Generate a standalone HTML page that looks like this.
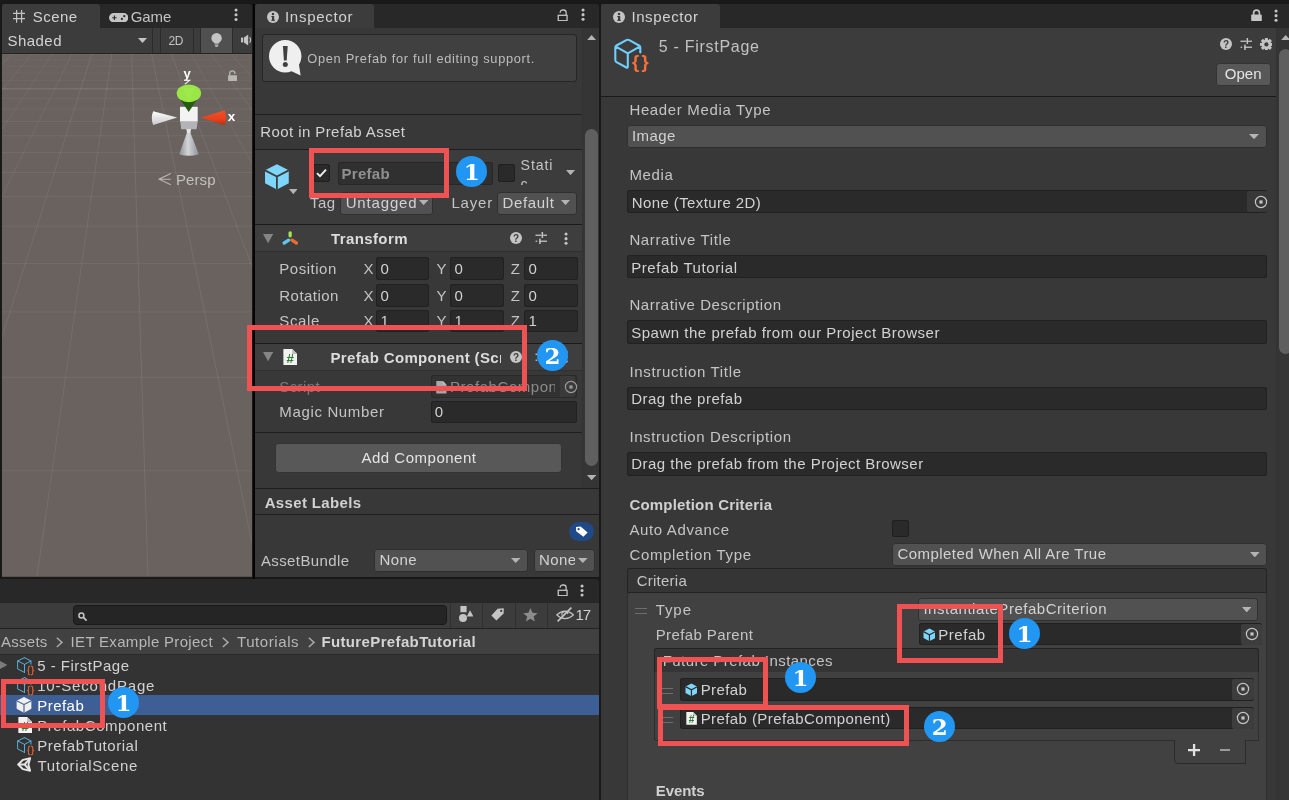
<!DOCTYPE html>
<html lang="en"><head><meta charset="utf-8"><title>Unity Inspector</title>
<style>
*{margin:0;padding:0;box-sizing:border-box}
html,body{width:1289px;height:800px;overflow:hidden;background:#191919}
body{font-family:"Liberation Sans",sans-serif;position:relative}
#root{position:absolute;left:0;top:0;width:1289px;height:800px;will-change:transform}
.a{position:absolute;display:block}
.t{white-space:nowrap;line-height:normal}
</style></head>
<body>
<div id="root">
<div class="a" style="left:2px;top:3.8px;width:249.8px;height:24px;background:#282828;border-radius:0 3px 0 0;"></div>
<div class="a" style="left:2px;top:3.8px;width:97.8px;height:24px;background:#3c3c3c;border-radius:3px 3px 0 0;"></div>
<svg class="a" style="left:13px;top:10px;" width="12.4" height="12.8" viewBox="0 0 12.4 12.8"><g stroke="#c4c4c4" stroke-width="1.2"><path d="M3.6 0V12.8M8.6 0V12.8M0 3.4H12.4M0 8.6H12.4"/></g></svg>
<div class="a t" style="left:32.8px;top:8.00px;font-size:15px;color:#d2d2d2;letter-spacing:0.467px;">Scene</div>
<svg class="a" style="left:109px;top:13px;" width="19.4" height="9.4" viewBox="0 0 19.4 9.4"><rect x="0" y="0" width="19.4" height="9.4" rx="4.7" fill="#c4c4c4"/><path d="M3.2 4.7H7.6M5.4 2.5V6.9" stroke="#282828" stroke-width="1.1"/><circle cx="15.3" cy="3.2" r="1.1" fill="#282828"/><circle cx="12.9" cy="5.9" r="1.1" fill="#282828"/></svg>
<div class="a t" style="left:130.7px;top:8.00px;font-size:15px;color:#c4c4c4;letter-spacing:-0.049px;">Game</div>
<svg class="a" style="left:233.95px;top:8.25px;" width="4.1" height="13.5" viewBox="0 0 4.1 13.5"><circle cx="2.05" cy="2.05" r="1.55" fill="#c4c4c4"/><circle cx="2.05" cy="6.75" r="1.55" fill="#c4c4c4"/><circle cx="2.05" cy="11.45" r="1.55" fill="#c4c4c4"/></svg>
<div class="a" style="left:2px;top:27.6px;width:250.3px;height:25.6px;background:#3c3c3c;"></div>
<div class="a" style="left:2px;top:53px;width:250.3px;height:1.2px;background:#232323;"></div>
<div class="a t" style="left:7.6px;top:32.00px;font-size:15px;color:#d2d2d2;letter-spacing:0.436px;">Shaded</div>
<svg class="a" style="left:138.2px;top:38.4px;" width="9" height="5" viewBox="0 0 9 5"><path d="M0 0H9L4.5 5Z" fill="#c4c4c4"/></svg>
<div class="a" style="left:152px;top:27.6px;width:1px;height:25.4px;background:#2c2c2c;"></div>
<div class="a" style="left:160px;top:27.6px;width:1px;height:25.4px;background:#2c2c2c;"></div>
<div class="a t" style="left:168.4px;top:34.00px;font-size:12px;color:#c4c4c4;letter-spacing:-0.240px;">2D</div>
<div class="a" style="left:193px;top:27.6px;width:1px;height:25.4px;background:#2c2c2c;"></div>
<div class="a" style="left:200.6px;top:27.6px;width:31.8px;height:25.4px;background:#505050;"></div>
<div class="a" style="left:200.2px;top:27.6px;width:1px;height:25.4px;background:#2c2c2c;"></div>
<div class="a" style="left:232.2px;top:27.6px;width:1px;height:25.4px;background:#2c2c2c;"></div>
<svg class="a" style="left:210.6px;top:33.2px;" width="11.2" height="13.8" viewBox="0 0 11.2 13.8"><circle cx="5.6" cy="5.2" r="5.2" fill="#c4c4c4"/><path d="M2.6 8H8.6L7.8 10.6H3.4Z" fill="#c4c4c4"/><rect x="3.6" y="11.4" width="4" height="1.3" rx="0.6" fill="#c4c4c4"/><rect x="4.4" y="13" width="2.4" height="0.8" fill="#c4c4c4"/></svg>
<svg class="a" style="left:241px;top:34.4px;" width="11.3" height="12" viewBox="0 0 11.3 12"><path d="M0 3.6H2.2V8.4H0Z" fill="#c4c4c4"/><path d="M3 3.4L7.2 0.4V11.6L3 8.6Z" fill="#c4c4c4"/><path d="M8.6 3.2Q10.4 6 8.6 8.8" fill="none" stroke="#c4c4c4" stroke-width="1.2"/></svg>
<svg class="a" style="left:2px;top:54.2px;" width="250.3" height="522.8" viewBox="0 0 250.3 522.8"><rect width="250.3" height="522.8" fill="#69625e"/><path d="M0 416.81H250.3" stroke="rgba(255,255,255,0.072)" stroke-width="1"/><path d="M0 323.36H250.3" stroke="rgba(255,255,255,0.072)" stroke-width="1"/><path d="M0 257.88H250.3" stroke="rgba(255,255,255,0.072)" stroke-width="1"/><path d="M0 209.45H250.3" stroke="rgba(255,255,255,0.072)" stroke-width="1"/><path d="M0 172.17H250.3" stroke="rgba(255,255,255,0.072)" stroke-width="1"/><path d="M0 142.59H250.3" stroke="rgba(255,255,255,0.072)" stroke-width="1"/><path d="M0 118.55H250.3" stroke="rgba(255,255,255,0.072)" stroke-width="1"/><path d="M0 98.63H250.3" stroke="rgba(255,255,255,0.072)" stroke-width="1"/><path d="M0 81.85H250.3" stroke="rgba(255,255,255,0.070)" stroke-width="1"/><path d="M0 67.52H250.3" stroke="rgba(255,255,255,0.061)" stroke-width="1"/><path d="M0 55.14H250.3" stroke="rgba(255,255,255,0.054)" stroke-width="1"/><path d="M0 44.34H250.3" stroke="rgba(255,255,255,0.047)" stroke-width="1"/><path d="M0 34.84H250.3" stroke="rgba(255,255,255,0.150)" stroke-width="1"/><path d="M0 26.41H250.3" stroke="rgba(255,255,255,0.036)" stroke-width="1"/><path d="M0 18.88H250.3" stroke="rgba(255,255,255,0.035)" stroke-width="1"/><path d="M0 12.12H250.3" stroke="rgba(255,255,255,0.035)" stroke-width="1"/><path d="M0 6.02H250.3" stroke="rgba(255,255,255,0.035)" stroke-width="1"/><path d="M0 0.47H250.3" stroke="rgba(255,255,255,0.035)" stroke-width="1"/><path d="M-149.01 0L-1408.00 522.8" stroke="rgba(255,255,255,0.065)" stroke-width="1"/><path d="M-129.11 0L-1297.00 522.8" stroke="rgba(255,255,255,0.065)" stroke-width="1"/><path d="M-109.21 0L-1186.00 522.8" stroke="rgba(255,255,255,0.065)" stroke-width="1"/><path d="M-89.31 0L-1075.00 522.8" stroke="rgba(255,255,255,0.065)" stroke-width="1"/><path d="M-69.41 0L-964.00 522.8" stroke="rgba(255,255,255,0.065)" stroke-width="1"/><path d="M-49.51 0L-853.00 522.8" stroke="rgba(255,255,255,0.065)" stroke-width="1"/><path d="M-29.61 0L-742.00 522.8" stroke="rgba(255,255,255,0.065)" stroke-width="1"/><path d="M-9.71 0L-631.00 522.8" stroke="rgba(255,255,255,0.065)" stroke-width="1"/><path d="M10.19 0L-520.00 522.8" stroke="rgba(255,255,255,0.065)" stroke-width="1"/><path d="M30.09 0L-409.00 522.8" stroke="rgba(255,255,255,0.065)" stroke-width="1"/><path d="M49.99 0L-298.00 522.8" stroke="rgba(255,255,255,0.065)" stroke-width="1"/><path d="M69.89 0L-187.00 522.8" stroke="rgba(255,255,255,0.065)" stroke-width="1"/><path d="M89.79 0L-76.00 522.8" stroke="rgba(255,255,255,0.085)" stroke-width="1"/><path d="M109.69 0L35.00 522.8" stroke="rgba(255,255,255,0.085)" stroke-width="1"/><path d="M129.59 0L146.00 522.8" stroke="rgba(255,255,255,0.085)" stroke-width="1"/><path d="M149.49 0L257.00 522.8" stroke="rgba(255,255,255,0.085)" stroke-width="1"/><path d="M169.39 0L368.00 522.8" stroke="rgba(255,255,255,0.085)" stroke-width="1"/><path d="M189.29 0L479.00 522.8" stroke="rgba(255,255,255,0.065)" stroke-width="1"/><path d="M209.18 0L590.00 522.8" stroke="rgba(255,255,255,0.065)" stroke-width="1"/><path d="M229.08 0L701.00 522.8" stroke="rgba(255,255,255,0.065)" stroke-width="1"/><path d="M248.98 0L812.00 522.8" stroke="rgba(255,255,255,0.065)" stroke-width="1"/><path d="M268.88 0L923.00 522.8" stroke="rgba(255,255,255,0.065)" stroke-width="1"/><path d="M288.78 0L1034.00 522.8" stroke="rgba(255,255,255,0.065)" stroke-width="1"/><path d="M308.68 0L1145.00 522.8" stroke="rgba(255,255,255,0.065)" stroke-width="1"/><path d="M328.58 0L1256.00 522.8" stroke="rgba(255,255,255,0.065)" stroke-width="1"/><path d="M348.48 0L1367.00 522.8" stroke="rgba(255,255,255,0.065)" stroke-width="1"/><path d="M368.38 0L1478.00 522.8" stroke="rgba(255,255,255,0.065)" stroke-width="1"/><path d="M388.28 0L1589.00 522.8" stroke="rgba(255,255,255,0.065)" stroke-width="1"/><path d="M408.18 0L1700.00 522.8" stroke="rgba(255,255,255,0.065)" stroke-width="1"/></svg>
<svg class="a" style="left:228px;top:70.4px;" width="9.2" height="11.2" viewBox="0 0 9.2 11.2"><path d="M1.7 5.4V3.4A2.6 2.6 0 0 1 6.9 3.4V4" fill="none" stroke="#b9b6b4" stroke-width="1.3"/><rect x="0.1" y="5.2" width="8.9" height="5.9" rx="0.6" fill="#b9b6b4"/></svg>
<svg class="a" style="left:140px;top:60px;" width="112" height="100" viewBox="0 0 112 100"><defs><linearGradient id="gl" x1="0" y1="0" x2="0" y2="1"><stop offset="0" stop-color="#ffffff"/><stop offset="1" stop-color="#c9c9cc"/></linearGradient><linearGradient id="gr" x1="0" y1="0" x2="0" y2="1"><stop offset="0" stop-color="#f0522a"/><stop offset="0.6" stop-color="#e8401c"/><stop offset="1" stop-color="#b8300f"/></linearGradient><linearGradient id="gb" x1="0" y1="0" x2="1" y2="0"><stop offset="0" stop-color="#8e9097"/><stop offset="0.45" stop-color="#d4d5d9"/><stop offset="1" stop-color="#8e9097"/></linearGradient></defs><path d="M48.6 68.0L58.8 94.2Q49.0 97.4 39.2 94.2Z" fill="url(#gb)"/><path d="M40.2 61.0H57.6L56.6 69.2H41.2Z" fill="#b4b4b8"/><path d="M46.4 69.0H51.0L50.4 73.0H47.0Z" fill="#e4e4e6"/><rect x="40.0" y="46.8" width="17.7" height="14.4" fill="#f3f3f3"/><path d="M37.2 57.4L13.2 51.2Q10.4 58.0 13.2 65.0Z" fill="url(#gl)"/><path d="M61.0 57.6L84.6 50.2Q87.6 57.6 84.6 65.2Z" fill="url(#gr)"/><path d="M40.4 39.5L48.7 52.0L57.0 39.5Z" fill="#255c12"/><ellipse cx="48.9" cy="33.3" rx="12.2" ry="8.9" fill="#9ae646"/><path d="M43.0 28.0L48.8 42.0L55.0 28.0Z" fill="#a2ec52" opacity="0.6"/><text x="43.6" y="18.4" font-family="Liberation Sans,sans-serif" font-weight="bold" font-size="13" fill="#ffffff">y</text><path d="M44.4 20.4H49.6L44.8 24.2" fill="none" stroke="#e8e8e8" stroke-width="1.2"/><text x="87.8" y="60.6" font-family="Liberation Sans,sans-serif" font-weight="bold" font-size="13.5" fill="#ffffff">x</text></svg>
<svg class="a" style="left:158px;top:173.4px;" width="13.4" height="12.6" viewBox="0 0 13.4 12.6"><path d="M12.8 0.6L1 6.2L12.8 11.8M1 6.2H12.8" fill="none" stroke="#b9b6b4" stroke-width="1.1"/></svg>
<div class="a t" style="left:175.9px;top:171.00px;font-size:15px;color:#c3c0be;letter-spacing:0.103px;">Persp</div>
<div class="a" style="left:252.5px;top:3.8px;width:2.2px;height:574.8px;background:#050505;"></div>
<div class="a" style="left:254.6px;top:3.8px;width:344.4px;height:24px;background:#282828;border-radius:0 3px 0 0;"></div>
<div class="a" style="left:254.6px;top:3.8px;width:119px;height:24px;background:#3c3c3c;border-radius:3px 3px 0 0;"></div>
<svg class="a" style="left:267px;top:11px;" width="12" height="12" viewBox="0 0 12 12"><circle cx="6" cy="6" r="6" fill="#c4c4c4"/><rect x="5" y="5" width="2.2" height="4.6" fill="#3c3c3c"/><rect x="4.3" y="5" width="2" height="1" fill="#3c3c3c"/><rect x="4.3" y="8.8" width="3.6" height="1" fill="#3c3c3c"/><circle cx="6" cy="3.1" r="1.25" fill="#3c3c3c"/></svg>
<div class="a t" style="left:284.9px;top:8.00px;font-size:15px;color:#d2d2d2;letter-spacing:0.750px;">Inspector</div>
<svg class="a" style="left:557.4px;top:8.8px;" width="11" height="12.4" viewBox="0 0 11 12.4"><path d="M9.1 6.2V3.5A2.5 2.5 0 0 0 6.6 1H5.6A2.4 2.4 0 0 0 3.2 3V3.8" fill="none" stroke="#c4c4c4" stroke-width="1.3"/><rect x="1.25" y="6.3" width="8.8" height="5.4" fill="none" stroke="#c4c4c4" stroke-width="1.3"/></svg>
<svg class="a" style="left:581.05px;top:8.45px;" width="4.1" height="13.3" viewBox="0 0 4.1 13.3"><circle cx="2.05" cy="2.05" r="1.55" fill="#c4c4c4"/><circle cx="2.05" cy="6.65" r="1.55" fill="#c4c4c4"/><circle cx="2.05" cy="11.25" r="1.55" fill="#c4c4c4"/></svg>
<div class="a" style="left:254.6px;top:27.8px;width:344.4px;height:549.4px;background:#383838;"></div>
<div class="a" style="left:582.4px;top:27.8px;width:16.6px;height:460.4px;background:#353535;"></div>
<div class="a" style="left:582.4px;top:27.8px;width:1px;height:460.4px;background:#323232;"></div>
<svg class="a" style="left:586.8px;top:35.2px;" width="9.2" height="5.2" viewBox="0 0 9.2 5.2"><path d="M0 5.2H9.2L4.6 0Z" fill="#b4b4b4"/></svg>
<div class="a" style="left:585px;top:129.4px;width:13px;height:337px;background:#5f5f5f;border-radius:6.5px;"></div>
<svg class="a" style="left:586.8px;top:475px;" width="9.2" height="5.2" viewBox="0 0 9.2 5.2"><path d="M0 0H9.2L4.6 5.2Z" fill="#b4b4b4"/></svg>
<div class="a" style="left:261.5px;top:34.2px;width:315px;height:48px;background:#404040;box-shadow:inset 0 0 0 1px #262626;border-radius:3.5px;"></div>
<svg class="a" style="left:268.6px;top:40.2px;" width="33" height="36" viewBox="0 0 33 36"><circle cx="16.2" cy="16.2" r="16.2" fill="#efefef"/><path d="M20 30L31.6 35.4L29.6 22Z" fill="#efefef"/><path d="M13.9 6H18.7L17.7 20.4H14.9Z" fill="#404040"/><circle cx="16.3" cy="24.6" r="2.5" fill="#404040"/></svg>
<div class="a t" style="left:307.3px;top:51.00px;font-size:12.8px;color:#bdbdbd;letter-spacing:0.695px;">Open Prefab for full editing support.</div>
<div class="a" style="left:254.6px;top:114px;width:327.8px;height:1px;background:#1f1f1f;"></div>
<div class="a t" style="left:260.2px;top:123.00px;font-size:15px;color:#d2d2d2;letter-spacing:0.424px;">Root in Prefab Asset</div>
<div class="a" style="left:254.6px;top:149px;width:327.8px;height:1px;background:#1f1f1f;"></div>
<div class="a" style="left:254.6px;top:150px;width:327.8px;height:74.4px;background:#3c3c3c;"></div>
<svg class="a" style="left:264.2px;top:163.2px;" width="25.8" height="27.6" viewBox="0 0 100 102"><path d="M50 2L96 26V76L50 100L4 76V26Z" fill="#7fd6fd"/><path d="M4 26L50 50L96 26M50 50V100" fill="none" stroke="#3c3c3c" stroke-width="6.97674"/></svg>
<svg class="a" style="left:288.6px;top:189px;" width="8.6" height="5.2" viewBox="0 0 8.6 5.2"><path d="M0 0H8.6L4.3 5.2Z" fill="#b4b4b4"/></svg>
<div class="a" style="left:313px;top:164.4px;width:17px;height:17.2px;background:#2a2a2a;box-shadow:inset 0 0 0 1px #1f1f1f;border-radius:3px;"></div>
<svg class="a" style="left:316.4px;top:167.6px;" width="11" height="10" viewBox="0 0 11 10"><path d="M1 5.2L4 8.2L10 1.6" fill="none" stroke="#f0f0f0" stroke-width="1.9"/></svg>
<div class="a" style="left:338.3px;top:162.4px;width:155px;height:22.6px;background:#303030;box-shadow:inset 0 0 0 1px #272727;border-radius:3px;"></div>
<div class="a t" style="left:341.6px;top:165.00px;font-size:15px;color:#909090;letter-spacing:0.263px;font-weight:700;">Prefab</div>
<div class="a" style="left:498.2px;top:164.4px;width:17px;height:17.2px;background:#2a2a2a;box-shadow:inset 0 0 0 1px #1f1f1f;border-radius:3px;"></div>
<div class="a t" style="left:520.6px;top:157.00px;font-size:14.2px;color:#c4c4c4;letter-spacing:0.846px;">Stati</div>
<div class="a" style="left:520px;top:176px;width:40px;height:9.2px;overflow:hidden"><div class="a t" style="left:.6px;top:0.2px;font-size:14.2px;color:#c4c4c4">c</div></div>
<svg class="a" style="left:566px;top:170.2px;" width="9" height="5.2" viewBox="0 0 9 5.2"><path d="M0 0H9L4.5 5.2Z" fill="#b4b4b4"/></svg>
<div class="a t" style="left:310px;top:194.00px;font-size:15px;color:#c4c4c4;letter-spacing:0.507px;">Tag</div>
<div class="a" style="left:340px;top:191.8px;width:93.2px;height:23.2px;background:#515151;box-shadow:inset 0 0 0 1px #303030;border-radius:3.5px;"></div>
<div class="a t" style="left:345.7px;top:194.00px;font-size:15px;color:#d2d2d2;letter-spacing:0.835px;">Untagged</div>
<svg class="a" style="left:419px;top:200px;" width="9.2" height="5.2" viewBox="0 0 9.2 5.2"><path d="M0 0H9.2L4.6 5.2Z" fill="#b4b4b4"/></svg>
<div class="a t" style="left:451.4px;top:194.00px;font-size:15px;color:#c4c4c4;letter-spacing:0.819px;">Layer</div>
<div class="a" style="left:497.2px;top:191.8px;width:80px;height:23.2px;background:#515151;box-shadow:inset 0 0 0 1px #303030;border-radius:3.5px;"></div>
<div class="a t" style="left:502.4px;top:194.00px;font-size:15px;color:#d2d2d2;letter-spacing:0.679px;">Default</div>
<svg class="a" style="left:561px;top:200px;" width="9" height="5.2" viewBox="0 0 9 5.2"><path d="M0 0H9L4.5 5.2Z" fill="#b4b4b4"/></svg>
<div class="a" style="left:254.6px;top:224.4px;width:327.8px;height:1px;background:#1a1a1a;"></div>
<div class="a" style="left:254.6px;top:225.4px;width:327.8px;height:25.8px;background:#3e3e3e;"></div>
<div class="a" style="left:254.6px;top:251px;width:327.8px;height:1px;background:#303030;"></div>
<svg class="a" style="left:262.8px;top:234.4px;" width="10.2" height="9.2" viewBox="0 0 10.2 9.2"><path d="M0 0H10.2L5.1 9.2Z" fill="#858585"/></svg>
<svg class="a" style="left:282px;top:230.6px;" width="16.4" height="14.4" viewBox="0 0 16.4 14.4"><rect x="6.5" y="0.2" width="3.3" height="6.2" rx="1.6" fill="#a5e34b"/><path d="M6.6 9.2L2.2 12" stroke="#5cc8f2" stroke-width="3.3" stroke-linecap="round"/><path d="M10 9.2L14.4 12" stroke="#ef6a32" stroke-width="3.3" stroke-linecap="round"/></svg>
<div class="a t" style="left:331px;top:230.00px;font-size:15px;color:#dcdcdc;letter-spacing:0.393px;font-weight:700;">Transform</div>
<svg class="a" style="left:510px;top:232.2px;" width="12" height="12" viewBox="0 0 12 12"><circle cx="6" cy="6" r="6" fill="#c4c4c4"/><text x="6" y="9.6" font-family="Liberation Sans,sans-serif" font-weight="bold" font-size="10" text-anchor="middle" fill="#3e3e3e">?</text></svg>
<svg class="a" style="left:534.8px;top:232.2px;" width="12.4" height="12" viewBox="0 0 12.4 12"><g fill="#c4c4c4"><rect x="0.5" y="2.6" width="6" height="1.3"/><rect x="8.2" y="2.6" width="3.8" height="1.3"/><rect x="6.6" y="0" width="1.5" height="6"/><rect x="0.6" y="8.6" width="1.6" height="1.3"/><rect x="4.2" y="8.6" width="7.8" height="1.3"/><rect x="4.2" y="6.6" width="1.5" height="5.4"/></g></svg>
<svg class="a" style="left:563.95px;top:231.55px;" width="4.1" height="13.3" viewBox="0 0 4.1 13.3"><circle cx="2.05" cy="2.05" r="1.55" fill="#c4c4c4"/><circle cx="2.05" cy="6.65" r="1.55" fill="#c4c4c4"/><circle cx="2.05" cy="11.25" r="1.55" fill="#c4c4c4"/></svg>
<div class="a t" style="left:279.3px;top:260.00px;font-size:15px;color:#c4c4c4;letter-spacing:0.519px;">Position</div>
<div class="a t" style="left:363.4px;top:260.00px;font-size:15px;color:#c4c4c4;">X</div>
<div class="a" style="left:376.2px;top:257.1px;width:53.2px;height:22.6px;background:#2a2a2a;box-shadow:inset 0 0 0 1px #212121;border-radius:3px;"></div>
<div class="a t" style="left:380.6px;top:260.00px;font-size:15px;color:#d2d2d2;">0</div>
<div class="a t" style="left:436.5px;top:260.00px;font-size:15px;color:#c4c4c4;">Y</div>
<div class="a" style="left:450.2px;top:257.1px;width:53.6px;height:22.6px;background:#2a2a2a;box-shadow:inset 0 0 0 1px #212121;border-radius:3px;"></div>
<div class="a t" style="left:454.6px;top:260.00px;font-size:15px;color:#d2d2d2;">0</div>
<div class="a t" style="left:510.8px;top:260.00px;font-size:15px;color:#c4c4c4;">Z</div>
<div class="a" style="left:524.2px;top:257.1px;width:53.6px;height:22.6px;background:#2a2a2a;box-shadow:inset 0 0 0 1px #212121;border-radius:3px;"></div>
<div class="a t" style="left:528.6px;top:260.00px;font-size:15px;color:#d2d2d2;">0</div>
<div class="a t" style="left:279.3px;top:287.00px;font-size:15px;color:#c4c4c4;letter-spacing:0.461px;">Rotation</div>
<div class="a t" style="left:363.4px;top:287.00px;font-size:15px;color:#c4c4c4;">X</div>
<div class="a" style="left:376.2px;top:284.1px;width:53.2px;height:22.6px;background:#2a2a2a;box-shadow:inset 0 0 0 1px #212121;border-radius:3px;"></div>
<div class="a t" style="left:380.6px;top:287.00px;font-size:15px;color:#d2d2d2;">0</div>
<div class="a t" style="left:436.5px;top:287.00px;font-size:15px;color:#c4c4c4;">Y</div>
<div class="a" style="left:450.2px;top:284.1px;width:53.6px;height:22.6px;background:#2a2a2a;box-shadow:inset 0 0 0 1px #212121;border-radius:3px;"></div>
<div class="a t" style="left:454.6px;top:287.00px;font-size:15px;color:#d2d2d2;">0</div>
<div class="a t" style="left:510.8px;top:287.00px;font-size:15px;color:#c4c4c4;">Z</div>
<div class="a" style="left:524.2px;top:284.1px;width:53.6px;height:22.6px;background:#2a2a2a;box-shadow:inset 0 0 0 1px #212121;border-radius:3px;"></div>
<div class="a t" style="left:528.6px;top:287.00px;font-size:15px;color:#d2d2d2;">0</div>
<div class="a t" style="left:279.3px;top:312.00px;font-size:15px;color:#c4c4c4;letter-spacing:0.619px;">Scale</div>
<div class="a t" style="left:363.4px;top:312.00px;font-size:15px;color:#c4c4c4;">X</div>
<div class="a" style="left:376.2px;top:309.5px;width:53.2px;height:22.6px;background:#2a2a2a;box-shadow:inset 0 0 0 1px #212121;border-radius:3px;"></div>
<div class="a t" style="left:380.6px;top:312.00px;font-size:15px;color:#d2d2d2;">1</div>
<div class="a t" style="left:436.5px;top:312.00px;font-size:15px;color:#c4c4c4;">Y</div>
<div class="a" style="left:450.2px;top:309.5px;width:53.6px;height:22.6px;background:#2a2a2a;box-shadow:inset 0 0 0 1px #212121;border-radius:3px;"></div>
<div class="a t" style="left:454.6px;top:312.00px;font-size:15px;color:#d2d2d2;">1</div>
<div class="a t" style="left:510.8px;top:312.00px;font-size:15px;color:#c4c4c4;">Z</div>
<div class="a" style="left:524.2px;top:309.5px;width:53.6px;height:22.6px;background:#2a2a2a;box-shadow:inset 0 0 0 1px #212121;border-radius:3px;"></div>
<div class="a t" style="left:528.6px;top:312.00px;font-size:15px;color:#d2d2d2;">1</div>
<div class="a" style="left:254.6px;top:343px;width:327.8px;height:1px;background:#1a1a1a;"></div>
<div class="a" style="left:254.6px;top:344px;width:327.8px;height:25.8px;background:#3e3e3e;"></div>
<div class="a" style="left:254.6px;top:369.8px;width:327.8px;height:1px;background:#303030;"></div>
<svg class="a" style="left:263px;top:352.4px;" width="10.2" height="9.2" viewBox="0 0 10.2 9.2"><path d="M0 0H10.2L5.1 9.2Z" fill="#858585"/></svg>
<svg class="a" style="left:282.6px;top:348.6px;" width="14.6" height="16.8" viewBox="0 0 14 17"><path d="M0 0H9L14 5V17H0Z" fill="#f2f2f2"/><path d="M9 0V5H14Z" fill="#bdbdbd"/><text x="7" y="14.6" font-family="Liberation Sans,sans-serif" font-weight="bold" font-size="13.5" text-anchor="middle" fill="#2e7d32">#</text></svg>
<div class="a t" style="left:330.5px;top:349.00px;font-size:15px;color:#dcdcdc;letter-spacing:0.340px;font-weight:700;width:170.4px;overflow:hidden;">Prefab Component (Script)</div>
<svg class="a" style="left:510px;top:350.8px;" width="12" height="12" viewBox="0 0 12 12"><circle cx="6" cy="6" r="6" fill="#c4c4c4"/><text x="6" y="9.6" font-family="Liberation Sans,sans-serif" font-weight="bold" font-size="10" text-anchor="middle" fill="#3e3e3e">?</text></svg>
<svg class="a" style="left:534.8px;top:350.8px;" width="12.4" height="12" viewBox="0 0 12.4 12"><g fill="#c4c4c4"><rect x="0.5" y="2.6" width="6" height="1.3"/><rect x="8.2" y="2.6" width="3.8" height="1.3"/><rect x="6.6" y="0" width="1.5" height="6"/><rect x="0.6" y="8.6" width="1.6" height="1.3"/><rect x="4.2" y="8.6" width="7.8" height="1.3"/><rect x="4.2" y="6.6" width="1.5" height="5.4"/></g></svg>
<svg class="a" style="left:563.95px;top:350.15px;" width="4.1" height="13.3" viewBox="0 0 4.1 13.3"><circle cx="2.05" cy="2.05" r="1.55" fill="#c4c4c4"/><circle cx="2.05" cy="6.65" r="1.55" fill="#c4c4c4"/><circle cx="2.05" cy="11.25" r="1.55" fill="#c4c4c4"/></svg>
<div class="a t" style="left:279.3px;top:378.00px;font-size:15px;color:#7a7a7a;letter-spacing:0.391px;">Script</div>
<div class="a" style="left:430.5px;top:375.2px;width:146px;height:22.4px;background:#323232;box-shadow:inset 0 0 0 1px #2a2a2a;border-radius:3px;"></div>
<div class="a" style="left:560.4px;top:376.2px;width:15px;height:20.4px;background:#3a3a3a;border-radius:0 2px 2px 0;"></div>
<svg class="a" style="left:435.8px;top:381.4px;" width="10.8" height="12.4" viewBox="0 0 14 17"><path d="M0 0H9L14 5V17H0Z" fill="#a8a8a8"/><path d="M9 0V5H14Z" fill="#bdbdbd"/><text x="7" y="14.6" font-family="Liberation Sans,sans-serif" font-weight="bold" font-size="13.5" text-anchor="middle" fill="#5b8f5e">#</text></svg>
<div class="a t" style="left:450px;top:378.00px;font-size:15px;color:#8a8a8a;letter-spacing:0.550px;width:104.6px;overflow:hidden;">PrefabComponent</div>
<svg class="a" style="left:564.4px;top:379.6px;" width="14" height="14" viewBox="0 0 14 14"><circle cx="7" cy="7" r="5.6" fill="none" stroke="#9a9a9a" stroke-width="1.2"/><rect x="5.4" y="5.4" width="3.2" height="3.2" fill="#9a9a9a"/></svg>
<div class="a t" style="left:279.3px;top:403.00px;font-size:15px;color:#c4c4c4;letter-spacing:0.652px;">Magic Number</div>
<div class="a" style="left:430.5px;top:400.6px;width:146px;height:22.2px;background:#2a2a2a;box-shadow:inset 0 0 0 1px #212121;border-radius:3px;"></div>
<div class="a t" style="left:434.8px;top:403.00px;font-size:15px;color:#d2d2d2;">0</div>
<div class="a" style="left:254.6px;top:432.2px;width:327.8px;height:1px;background:#1f1f1f;"></div>
<div class="a" style="left:275.2px;top:443.4px;width:286.6px;height:29.4px;background:#585858;box-shadow:inset 0 0 0 1px #343434;border-radius:4px;"></div>
<div class="a t" style="left:361.4px;top:449.00px;font-size:15px;color:#e4e4e4;letter-spacing:0.516px;">Add Component</div>
<div class="a" style="left:254.6px;top:488.2px;width:344.4px;height:1px;background:#1f1f1f;"></div>
<div class="a t" style="left:264.7px;top:494.00px;font-size:15px;color:#d0d0d0;letter-spacing:0.341px;font-weight:700;">Asset Labels</div>
<div class="a" style="left:254.6px;top:514.2px;width:344.4px;height:1px;background:#1f1f1f;"></div>
<div class="a" style="left:569.3px;top:522px;width:24.8px;height:19px;background:#204a87;border-radius:9.5px;"></div>
<svg class="a" style="left:575px;top:526px;" width="13" height="11" viewBox="0 0 13 11"><path d="M1 1L5.6 0.6L12.6 6.6L8.4 10.8L1.2 5.2Z" fill="#fff"/><circle cx="3.6" cy="3.2" r="1.15" fill="#204a87"/></svg>
<div class="a t" style="left:260.9px;top:552.00px;font-size:15px;color:#c4c4c4;letter-spacing:0.408px;">AssetBundle</div>
<div class="a" style="left:374px;top:548.8px;width:154px;height:23.4px;background:#515151;box-shadow:inset 0 0 0 1px #303030;border-radius:3.5px;"></div>
<div class="a t" style="left:379.6px;top:551.00px;font-size:15px;color:#d2d2d2;letter-spacing:0.380px;">None</div>
<svg class="a" style="left:511px;top:558px;" width="9.4" height="5" viewBox="0 0 9.4 5"><path d="M0 0H9.4L4.7 5Z" fill="#b4b4b4"/></svg>
<div class="a" style="left:533.6px;top:548.8px;width:61.4px;height:23.4px;background:#515151;box-shadow:inset 0 0 0 1px #303030;border-radius:3.5px;"></div>
<div class="a t" style="left:539px;top:551.00px;font-size:15px;color:#d2d2d2;letter-spacing:0.380px;width:36.4px;overflow:hidden;">None</div>
<svg class="a" style="left:578.2px;top:558px;" width="9.6" height="5" viewBox="0 0 9.6 5"><path d="M0 0H9.6L4.8 5Z" fill="#b4b4b4"/></svg>
<div class="a" style="left:0px;top:578.6px;width:599.1px;height:24.2px;background:#282828;border-radius:0 3px 0 0;"></div>
<svg class="a" style="left:556.8px;top:584px;" width="11" height="12.4" viewBox="0 0 11 12.4"><path d="M9.1 6.2V3.5A2.5 2.5 0 0 0 6.6 1H5.6A2.4 2.4 0 0 0 3.2 3V3.8" fill="none" stroke="#c4c4c4" stroke-width="1.3"/><rect x="1.25" y="6.3" width="8.8" height="5.4" fill="none" stroke="#c4c4c4" stroke-width="1.3"/></svg>
<svg class="a" style="left:579.95px;top:583.55px;" width="4.1" height="13.1" viewBox="0 0 4.1 13.1"><circle cx="2.05" cy="2.05" r="1.55" fill="#c4c4c4"/><circle cx="2.05" cy="6.55" r="1.55" fill="#c4c4c4"/><circle cx="2.05" cy="11.05" r="1.55" fill="#c4c4c4"/></svg>
<div class="a" style="left:0px;top:602.8px;width:599.1px;height:26px;background:#3c3c3c;"></div>
<div class="a" style="left:0px;top:628.4px;width:599.1px;height:1px;background:#232323;"></div>
<div class="a" style="left:72.6px;top:605.4px;width:374.4px;height:19.4px;background:#252525;box-shadow:inset 0 0 0 1px #1a1a1a;border-radius:4.5px;"></div>
<svg class="a" style="left:78.4px;top:611.6px;" width="9.4" height="9.4" viewBox="0 0 9.4 9.4"><circle cx="3.4" cy="3.4" r="2.5" fill="none" stroke="#c4c4c4" stroke-width="1.5"/><path d="M5.2 5.2L8.6 8.6" stroke="#c4c4c4" stroke-width="1.8"/></svg>
<div class="a" style="left:449.8px;top:602.8px;width:1px;height:25.6px;background:#303030;"></div>
<div class="a" style="left:481.9px;top:602.8px;width:1px;height:25.6px;background:#303030;"></div>
<div class="a" style="left:515.3px;top:602.8px;width:1px;height:25.6px;background:#303030;"></div>
<div class="a" style="left:547.3px;top:602.8px;width:1px;height:25.6px;background:#303030;"></div>
<svg class="a" style="left:458.8px;top:606px;" width="14.4" height="16.2" viewBox="0 0 14.4 16.2"><rect x="1.4" y="0" width="6.2" height="6.2" fill="#c4c4c4"/><circle cx="4" cy="12" r="4" fill="#c4c4c4"/><path d="M7.8 10.6L11 4.2L14.4 10.6Z" fill="#c4c4c4"/></svg>
<svg class="a" style="left:491.4px;top:608.2px;" width="13.4" height="13" viewBox="0 0 13.4 13"><path d="M6.6 0.8L12.8 0.2L12.6 5.4L5.4 12.6L0.4 7.4Z" fill="#c4c4c4"/><circle cx="10.2" cy="2.9" r="1.1" fill="#3c3c3c"/></svg>
<svg class="a" style="left:523.4px;top:608.2px;" width="14.8" height="13.4" viewBox="0 0 14.8 13.4"><path d="M7.4 0L9.4 4.8L14.6 5.2L10.6 8.6L11.9 13.4L7.4 10.7L2.9 13.4L4.2 8.6L0.2 5.2L5.4 4.8Z" fill="#8c8c8c"/></svg>
<svg class="a" style="left:556px;top:606.8px;" width="18.4" height="14.8" viewBox="0 0 18.4 14.8"><path d="M0.7 7.9Q9 0.2 17.6 7.9Q9 15.4 0.7 7.9Z" fill="none" stroke="#c4c4c4" stroke-width="1.25"/><path d="M6 8.6A3.1 3.1 0 0 1 12 7" fill="none" stroke="#c4c4c4" stroke-width="1.1"/><path d="M1.6 14.4L15.4 0.6" stroke="#c4c4c4" stroke-width="1.6"/></svg>
<div class="a t" style="left:575.6px;top:606.00px;font-size:15px;color:#d2d2d2;letter-spacing:-1.285px;">17</div>
<div class="a" style="left:0px;top:629.4px;width:599.1px;height:24.4px;background:#414141;"></div>
<div class="a" style="left:0px;top:653.6px;width:599.1px;height:1px;background:#2a2a2a;"></div>
<div class="a t" style="left:1px;top:633.00px;font-size:15px;color:#b8b8b8;letter-spacing:0.257px;">Assets</div>
<svg class="a" style="left:56.4px;top:636.6px;" width="7" height="11" viewBox="0 0 7 11"><path d="M0.8 0.8L6 5.4L0.8 10" fill="none" stroke="#a8a8a8" stroke-width="1.5"/></svg>
<div class="a t" style="left:70.6px;top:633.00px;font-size:15px;color:#b8b8b8;letter-spacing:0.308px;">IET Example Project</div>
<svg class="a" style="left:222px;top:636.6px;" width="7" height="11" viewBox="0 0 7 11"><path d="M0.8 0.8L6 5.4L0.8 10" fill="none" stroke="#a8a8a8" stroke-width="1.5"/></svg>
<div class="a t" style="left:237px;top:633.00px;font-size:15px;color:#b8b8b8;letter-spacing:0.580px;">Tutorials</div>
<svg class="a" style="left:307.6px;top:636.6px;" width="7" height="11" viewBox="0 0 7 11"><path d="M0.8 0.8L6 5.4L0.8 10" fill="none" stroke="#a8a8a8" stroke-width="1.5"/></svg>
<div class="a t" style="left:321.4px;top:633.00px;font-size:15px;color:#d4d4d4;letter-spacing:0.367px;font-weight:700;">FuturePrefabTutorial</div>
<div class="a" style="left:0px;top:654.6px;width:599.1px;height:145.4px;background:#333333;"></div>
<div class="a" style="left:0px;top:694.8px;width:599.1px;height:20.2px;background:#3e5f96;"></div>
<svg class="a" style="left:0px;top:661.4px;" width="7.4" height="8" viewBox="0 0 7.4 8"><path d="M0 0V8L7.4 4Z" fill="#7c7c7c"/></svg>
<svg class="a" style="left:17px;top:656.8px;" width="19.76" height="19.76" viewBox="0 0 38 38"><path d="M14.5 1.2L26.8 7.6V14" fill="none" stroke="#5cb8e6" stroke-width="1.8" stroke-linejoin="round" stroke-linecap="round"/><path d="M14.5 1.2L1.2 7.6V23L14.5 29.6" fill="none" stroke="#5cb8e6" stroke-width="1.8" stroke-linejoin="round" stroke-linecap="round"/><path d="M1.2 7.6L14.5 14.2L26.8 7.6M14.5 14.2V29.6" fill="none" stroke="#5cb8e6" stroke-width="1.8" stroke-linejoin="round" stroke-linecap="round"/><text x="27.2" y="30.4" font-family="Liberation Sans,sans-serif" font-weight="normal" font-size="18.6" text-anchor="middle" fill="#e8642f" letter-spacing="1.6" stroke="#e8642f" stroke-width="0.5">{}</text></svg>
<div class="a t" style="left:37.2px;top:657.00px;font-size:15px;color:#d2d2d2;letter-spacing:0.495px;">5 - FirstPage</div>
<svg class="a" style="left:17px;top:676.9px;" width="19.76" height="19.76" viewBox="0 0 38 38"><path d="M14.5 1.2L26.8 7.6V14" fill="none" stroke="#5cb8e6" stroke-width="1.8" stroke-linejoin="round" stroke-linecap="round"/><path d="M14.5 1.2L1.2 7.6V23L14.5 29.6" fill="none" stroke="#5cb8e6" stroke-width="1.8" stroke-linejoin="round" stroke-linecap="round"/><path d="M1.2 7.6L14.5 14.2L26.8 7.6M14.5 14.2V29.6" fill="none" stroke="#5cb8e6" stroke-width="1.8" stroke-linejoin="round" stroke-linecap="round"/><text x="27.2" y="30.4" font-family="Liberation Sans,sans-serif" font-weight="normal" font-size="18.6" text-anchor="middle" fill="#e8642f" letter-spacing="1.6" stroke="#e8642f" stroke-width="0.5">{}</text></svg>
<div class="a t" style="left:37.2px;top:677.00px;font-size:15px;color:#d2d2d2;letter-spacing:0.801px;">10-SecondPage</div>
<svg class="a" style="left:16.2px;top:696px;" width="16" height="17.6" viewBox="0 0 100 102"><path d="M50 2L96 26V76L50 100L4 76V26Z" fill="#f0f0f0"/><path d="M4 26L50 50L96 26M50 50V100" fill="none" stroke="#5a6f96" stroke-width="8.125"/></svg>
<div class="a t" style="left:37.2px;top:697.00px;font-size:15px;color:#ffffff;letter-spacing:0.481px;">Prefab</div>
<svg class="a" style="left:17.8px;top:716.6px;" width="14.4" height="16.6" viewBox="0 0 14 17"><path d="M0 0H9L14 5V17H0Z" fill="#f2f2f2"/><path d="M9 0V5H14Z" fill="#bdbdbd"/><text x="7" y="14.6" font-family="Liberation Sans,sans-serif" font-weight="bold" font-size="13.5" text-anchor="middle" fill="#2e7d32">#</text></svg>
<div class="a t" style="left:37.2px;top:717.00px;font-size:15px;color:#d2d2d2;letter-spacing:0.561px;">PrefabComponent</div>
<svg class="a" style="left:17px;top:737.1px;" width="19.76" height="19.76" viewBox="0 0 38 38"><path d="M14.5 1.2L26.8 7.6V14" fill="none" stroke="#5cb8e6" stroke-width="1.8" stroke-linejoin="round" stroke-linecap="round"/><path d="M14.5 1.2L1.2 7.6V23L14.5 29.6" fill="none" stroke="#5cb8e6" stroke-width="1.8" stroke-linejoin="round" stroke-linecap="round"/><path d="M1.2 7.6L14.5 14.2L26.8 7.6M14.5 14.2V29.6" fill="none" stroke="#5cb8e6" stroke-width="1.8" stroke-linejoin="round" stroke-linecap="round"/><text x="27.2" y="30.4" font-family="Liberation Sans,sans-serif" font-weight="normal" font-size="18.6" text-anchor="middle" fill="#e8642f" letter-spacing="1.6" stroke="#e8642f" stroke-width="0.5">{}</text></svg>
<div class="a t" style="left:37.2px;top:737.00px;font-size:15px;color:#d2d2d2;letter-spacing:0.534px;">PrefabTutorial</div>
<svg class="a" style="left:16.8px;top:756.8px;" width="14.4" height="15" viewBox="0 0 14.4 15"><path d="M13.2 1.2L6 2.8L1.2 7.5L6 12.2L13.2 13.8L11.4 7.5Z" fill="none" stroke="#e6e6e6" stroke-width="1.9" stroke-linejoin="round"/><path d="M1.4 7.5H7.6M7.6 7.5L12.6 2M7.6 7.5L12.6 13" fill="none" stroke="#e6e6e6" stroke-width="1.9"/></svg>
<div class="a t" style="left:37.6px;top:757.00px;font-size:15px;color:#d2d2d2;letter-spacing:0.642px;">TutorialScene</div>
<div class="a" style="left:601px;top:3.8px;width:688px;height:24px;background:#282828;"></div>
<div class="a" style="left:601px;top:3.8px;width:118.8px;height:24px;background:#3c3c3c;border-radius:3px 3px 0 0;"></div>
<svg class="a" style="left:613px;top:11.4px;" width="12" height="12" viewBox="0 0 12 12"><circle cx="6" cy="6" r="6" fill="#c4c4c4"/><rect x="5" y="5" width="2.2" height="4.6" fill="#3c3c3c"/><rect x="4.3" y="5" width="2" height="1" fill="#3c3c3c"/><rect x="4.3" y="8.8" width="3.6" height="1" fill="#3c3c3c"/><circle cx="6" cy="3.1" r="1.25" fill="#3c3c3c"/></svg>
<div class="a t" style="left:631.4px;top:8.00px;font-size:15px;color:#d2d2d2;letter-spacing:0.612px;">Inspector</div>
<svg class="a" style="left:1250.6px;top:8.8px;" width="11" height="12.4" viewBox="0 0 11 12.4"><path d="M2.6 6V4A2.9 2.9 0 0 1 8.4 4V6" fill="none" stroke="#c4c4c4" stroke-width="1.6"/><rect x="0.2" y="5.6" width="10.6" height="6.6" rx="0.8" fill="#c4c4c4"/></svg>
<svg class="a" style="left:1273.95px;top:8.55px;" width="4.1" height="13.3" viewBox="0 0 4.1 13.3"><circle cx="2.05" cy="2.05" r="1.55" fill="#c4c4c4"/><circle cx="2.05" cy="6.65" r="1.55" fill="#c4c4c4"/><circle cx="2.05" cy="11.25" r="1.55" fill="#c4c4c4"/></svg>
<div class="a" style="left:601px;top:27.8px;width:688px;height:772.2px;background:#383838;"></div>
<div class="a" style="left:601px;top:27.8px;width:675.4px;height:68.4px;background:#3c3c3c;"></div>
<div class="a" style="left:601px;top:96.2px;width:675.4px;height:1px;background:#1a1a1a;"></div>
<div class="a" style="left:1276.4px;top:27.8px;width:12.6px;height:772.2px;background:#353535;"></div>
<div class="a" style="left:1276.4px;top:27.8px;width:1px;height:772.2px;background:#323232;"></div>
<svg class="a" style="left:1281px;top:35.2px;" width="9.4" height="5.2" viewBox="0 0 9.4 5.2"><path d="M0 5.2H9.4L4.7 0Z" fill="#b4b4b4"/></svg>
<div class="a" style="left:1279px;top:49.2px;width:13px;height:304.4px;background:#5f5f5f;border-radius:6.5px;"></div>
<svg class="a" style="left:612px;top:36px;" width="40" height="40" viewBox="0 0 40 40"><path d="M28.3 16.4V11.6Q28.3 10.2 27.0 9.5L17.3 4.1Q15.8 3.3 14.3 4.1L4.5 9.5Q3.3 10.2 3.3 11.7V24.0Q3.3 25.4 4.5 26.1L14.4 31.5Q15.8 32.3 15.8 30.6V17.4M3.9 10.7L15.8 17.4L27.7 10.7" fill="none" stroke="#6fcfff" stroke-width="2.1" stroke-linejoin="round" stroke-linecap="round"/><text x="29.5" y="32.4" font-family="Liberation Sans,sans-serif" font-weight="bold" font-size="18.6" text-anchor="middle" fill="#f4713c" letter-spacing="2.2">{}</text></svg>
<div class="a t" style="left:658.8px;top:38.00px;font-size:16px;color:#c2c2c2;letter-spacing:0.718px;">5 - FirstPage</div>
<svg class="a" style="left:1220px;top:38px;" width="12" height="12" viewBox="0 0 12 12"><circle cx="6" cy="6" r="6" fill="#c4c4c4"/><text x="6" y="9.6" font-family="Liberation Sans,sans-serif" font-weight="bold" font-size="10" text-anchor="middle" fill="#3c3c3c">?</text></svg>
<svg class="a" style="left:1239.8px;top:38px;" width="12.4" height="12" viewBox="0 0 12.4 12"><g fill="#c4c4c4"><rect x="0.5" y="2.6" width="6" height="1.3"/><rect x="8.2" y="2.6" width="3.8" height="1.3"/><rect x="6.6" y="0" width="1.5" height="6"/><rect x="0.6" y="8.6" width="1.6" height="1.3"/><rect x="4.2" y="8.6" width="7.8" height="1.3"/><rect x="4.2" y="6.6" width="1.5" height="5.4"/></g></svg>
<svg class="a" style="left:1259.6px;top:37.6px;" width="12.8" height="12.8" viewBox="0 0 12.8 12.8"><g transform="translate(6.4 6.4)"><rect x="-1.5" y="-6.4" width="3" height="3.4" fill="#c4c4c4" transform="rotate(0)"/><rect x="-1.5" y="-6.4" width="3" height="3.4" fill="#c4c4c4" transform="rotate(45)"/><rect x="-1.5" y="-6.4" width="3" height="3.4" fill="#c4c4c4" transform="rotate(90)"/><rect x="-1.5" y="-6.4" width="3" height="3.4" fill="#c4c4c4" transform="rotate(135)"/><rect x="-1.5" y="-6.4" width="3" height="3.4" fill="#c4c4c4" transform="rotate(180)"/><rect x="-1.5" y="-6.4" width="3" height="3.4" fill="#c4c4c4" transform="rotate(225)"/><rect x="-1.5" y="-6.4" width="3" height="3.4" fill="#c4c4c4" transform="rotate(270)"/><rect x="-1.5" y="-6.4" width="3" height="3.4" fill="#c4c4c4" transform="rotate(315)"/><circle r="4.8" fill="#c4c4c4"/><circle r="2.1" fill="#3c3c3c"/></g></svg>
<div class="a" style="left:1215.6px;top:63.2px;width:55px;height:22.6px;background:#585858;box-shadow:inset 0 0 0 1px #343434;border-radius:3.5px;"></div>
<div class="a t" style="left:1224.8px;top:65.00px;font-size:15px;color:#e4e4e4;letter-spacing:0.002px;">Open</div>
<div class="a t" style="left:629.4px;top:101.00px;font-size:15px;color:#c4c4c4;letter-spacing:0.654px;">Header Media Type</div>
<div class="a" style="left:626.6px;top:125.2px;width:640.8px;height:22.8px;background:#515151;box-shadow:inset 0 0 0 1px #303030;border-radius:3.5px;"></div>
<div class="a t" style="left:632px;top:127.00px;font-size:15px;color:#d2d2d2;letter-spacing:0.427px;">Image</div>
<svg class="a" style="left:1249.4px;top:133.8px;" width="10" height="5.2" viewBox="0 0 10 5.2"><path d="M0 0H10L5 5.2Z" fill="#b4b4b4"/></svg>
<div class="a t" style="left:629.4px;top:166.00px;font-size:15px;color:#c4c4c4;letter-spacing:0.636px;">Media</div>
<div class="a" style="left:627.4px;top:190.2px;width:639.2px;height:22.6px;background:#2a2a2a;box-shadow:inset 0 0 0 1px #212121;border-radius:3px;"></div>
<div class="a t" style="left:631.7px;top:194.00px;font-size:15px;color:#d2d2d2;letter-spacing:0.409px;">None (Texture 2D)</div>
<div class="a" style="left:1246.6px;top:191px;width:20px;height:21px;background:#383838;border-radius:2px;"></div>
<svg class="a" style="left:1254.2px;top:194.6px;" width="14" height="14" viewBox="0 0 14 14"><circle cx="7" cy="7" r="5.6" fill="none" stroke="#c4c4c4" stroke-width="1.2"/><rect x="5.4" y="5.4" width="3.2" height="3.2" fill="#c4c4c4"/></svg>
<div class="a t" style="left:629.4px;top:231.00px;font-size:15px;color:#c4c4c4;letter-spacing:0.634px;">Narrative Title</div>
<div class="a" style="left:627.4px;top:255.2px;width:639.2px;height:22.6px;background:#2a2a2a;box-shadow:inset 0 0 0 1px #212121;border-radius:3px;"></div>
<div class="a t" style="left:631.2px;top:259.00px;font-size:15px;color:#d2d2d2;letter-spacing:0.589px;">Prefab Tutorial</div>
<div class="a t" style="left:629.4px;top:296.00px;font-size:15px;color:#c4c4c4;letter-spacing:0.577px;">Narrative Description</div>
<div class="a" style="left:627.4px;top:320.2px;width:639.2px;height:23.4px;background:#2a2a2a;box-shadow:inset 0 0 0 1px #212121;border-radius:3px;"></div>
<div class="a t" style="left:631.2px;top:324.00px;font-size:15px;color:#d2d2d2;letter-spacing:0.514px;">Spawn the prefab from our Project Browser</div>
<div class="a t" style="left:629.4px;top:363.00px;font-size:15px;color:#c4c4c4;letter-spacing:0.670px;">Instruction Title</div>
<div class="a" style="left:627.4px;top:387.1px;width:639.2px;height:22.6px;background:#2a2a2a;box-shadow:inset 0 0 0 1px #212121;border-radius:3px;"></div>
<div class="a t" style="left:631.2px;top:390.00px;font-size:15px;color:#d2d2d2;letter-spacing:0.469px;">Drag the prefab</div>
<div class="a t" style="left:629.4px;top:428.00px;font-size:15px;color:#c4c4c4;letter-spacing:0.600px;">Instruction Description</div>
<div class="a" style="left:627.4px;top:452.4px;width:639.2px;height:23.3px;background:#2a2a2a;box-shadow:inset 0 0 0 1px #212121;border-radius:3px;"></div>
<div class="a t" style="left:631.2px;top:455.00px;font-size:15px;color:#d2d2d2;letter-spacing:0.475px;">Drag the prefab from the Project Browser</div>
<div class="a t" style="left:629.4px;top:496.00px;font-size:15px;color:#d0d0d0;letter-spacing:0.190px;font-weight:700;">Completion Criteria</div>
<div class="a t" style="left:629.4px;top:521.00px;font-size:15px;color:#c4c4c4;letter-spacing:0.639px;">Auto Advance</div>
<div class="a" style="left:892px;top:520px;width:17.2px;height:17.4px;background:#2a2a2a;box-shadow:inset 0 0 0 1px #1f1f1f;border-radius:3px;"></div>
<div class="a t" style="left:629.4px;top:546.00px;font-size:15px;color:#c4c4c4;letter-spacing:0.665px;">Completion Type</div>
<div class="a" style="left:891.8px;top:543px;width:375px;height:23.2px;background:#515151;box-shadow:inset 0 0 0 1px #303030;border-radius:3.5px;"></div>
<div class="a t" style="left:897.4px;top:545.00px;font-size:15px;color:#d2d2d2;letter-spacing:0.455px;">Completed When All Are True</div>
<svg class="a" style="left:1250px;top:552px;" width="9.6" height="5.4" viewBox="0 0 9.6 5.4"><path d="M0 0H9.6L4.8 5.4Z" fill="#b4b4b4"/></svg>
<div class="a" style="left:626.9px;top:568.2px;width:640.1px;height:24.7px;background:#353535;box-shadow:inset 0 0 0 1px #242424;border-radius:3px 3px 0 0;"></div>
<div class="a t" style="left:636.7px;top:572.00px;font-size:15px;color:#c4c4c4;letter-spacing:0.251px;">Criteria</div>
<div class="a" style="left:627.4px;top:593.2px;width:639.6px;height:210px;background:#414141;border-radius:3.5px 0 0 0;border-left:1px solid #2e2e2e;border-right:1px solid #2e2e2e;"></div>
<div class="a" style="left:634.8px;top:607.8px;width:12.4px;height:1.1px;background:#6e6e6e;"></div>
<div class="a" style="left:634.8px;top:612.5px;width:12.4px;height:1.1px;background:#6e6e6e;"></div>
<div class="a t" style="left:655.7px;top:601.00px;font-size:15px;color:#c4c4c4;letter-spacing:0.926px;">Type</div>
<div class="a" style="left:917.7px;top:597.7px;width:340.6px;height:23.2px;background:#515151;box-shadow:inset 0 0 0 1px #303030;border-radius:3.5px;"></div>
<div class="a t" style="left:923.4px;top:600.00px;font-size:15px;color:#d2d2d2;letter-spacing:0.524px;">InstantiatePrefabCriterion</div>
<svg class="a" style="left:1242px;top:607px;" width="9.4" height="5.4" viewBox="0 0 9.4 5.4"><path d="M0 0H9.4L4.7 5.4Z" fill="#b4b4b4"/></svg>
<div class="a t" style="left:655.7px;top:626.00px;font-size:15px;color:#c4c4c4;letter-spacing:0.395px;">Prefab Parent</div>
<div class="a" style="left:918.5px;top:623.3px;width:343.7px;height:22.2px;background:#2a2a2a;box-shadow:inset 0 0 0 1px #212121;border-radius:3px;"></div>
<div class="a" style="left:1241.4px;top:624.1px;width:20.8px;height:20.6px;background:#3d3d3d;border-radius:2px;"></div>
<svg class="a" style="left:1245.3px;top:627.2px;" width="14" height="14" viewBox="0 0 14 14"><circle cx="7" cy="7" r="5.6" fill="none" stroke="#c4c4c4" stroke-width="1.2"/><rect x="5.4" y="5.4" width="3.2" height="3.2" fill="#c4c4c4"/></svg>
<svg class="a" style="left:922.5px;top:627.8px;" width="12.9" height="13.7" viewBox="0 0 100 102"><path d="M50 2L96 26V76L50 100L4 76V26Z" fill="#7fd6fd"/><path d="M4 26L50 50L96 26M50 50V100" fill="none" stroke="#2a2a2a" stroke-width="9.30233"/></svg>
<div class="a t" style="left:938.2px;top:626.00px;font-size:15px;color:#d2d2d2;letter-spacing:0.561px;">Prefab</div>
<div class="a" style="left:654.2px;top:648.4px;width:604.8px;height:24.2px;background:#353535;box-shadow:inset 0 0 0 1px #242424;border-radius:3px 3px 0 0;"></div>
<div class="a t" style="left:662.7px;top:652.00px;font-size:15px;color:#c4c4c4;letter-spacing:0.446px;">Future Prefab Instances</div>
<div class="a" style="left:654.2px;top:672.4px;width:604.8px;height:68.4px;background:#414141;border-radius:0 0 0 3px;border:1px solid #2e2e2e;border-top:none;"></div>
<div class="a" style="left:662.4px;top:688.2px;width:10.4px;height:1.1px;background:#6e6e6e;"></div>
<div class="a" style="left:662.4px;top:692.6px;width:10.4px;height:1.1px;background:#6e6e6e;"></div>
<div class="a" style="left:679.8px;top:678.4px;width:574px;height:22.2px;background:#2a2a2a;box-shadow:inset 0 0 0 1px #212121;border-radius:3px;"></div>
<div class="a" style="left:1232.4px;top:679.2px;width:21.4px;height:20.6px;background:#3d3d3d;border-radius:2px;"></div>
<svg class="a" style="left:1236.3px;top:682.3px;" width="14" height="14" viewBox="0 0 14 14"><circle cx="7" cy="7" r="5.6" fill="none" stroke="#c4c4c4" stroke-width="1.2"/><rect x="5.4" y="5.4" width="3.2" height="3.2" fill="#c4c4c4"/></svg>
<div class="a" style="left:662.4px;top:717.2px;width:10.4px;height:1.1px;background:#6e6e6e;"></div>
<div class="a" style="left:662.4px;top:721.6px;width:10.4px;height:1.1px;background:#6e6e6e;"></div>
<div class="a" style="left:679.8px;top:707.3px;width:574px;height:22.2px;background:#2a2a2a;box-shadow:inset 0 0 0 1px #212121;border-radius:3px;"></div>
<div class="a" style="left:1232.4px;top:708.1px;width:21.4px;height:20.6px;background:#3d3d3d;border-radius:2px;"></div>
<svg class="a" style="left:1236.3px;top:711.2px;" width="14" height="14" viewBox="0 0 14 14"><circle cx="7" cy="7" r="5.6" fill="none" stroke="#c4c4c4" stroke-width="1.2"/><rect x="5.4" y="5.4" width="3.2" height="3.2" fill="#c4c4c4"/></svg>
<svg class="a" style="left:684.6px;top:682.6px;" width="12.9" height="13.7" viewBox="0 0 100 102"><path d="M50 2L96 26V76L50 100L4 76V26Z" fill="#7fd6fd"/><path d="M4 26L50 50L96 26M50 50V100" fill="none" stroke="#2a2a2a" stroke-width="9.30233"/></svg>
<div class="a t" style="left:700.7px;top:681.00px;font-size:15px;color:#d2d2d2;letter-spacing:0.381px;">Prefab</div>
<svg class="a" style="left:686px;top:712.4px;" width="11.2" height="12.8" viewBox="0 0 14 17"><path d="M0 0H9L14 5V17H0Z" fill="#f2f2f2"/><path d="M9 0V5H14Z" fill="#bdbdbd"/><text x="7" y="14.6" font-family="Liberation Sans,sans-serif" font-weight="bold" font-size="13.5" text-anchor="middle" fill="#2e7d32">#</text></svg>
<div class="a t" style="left:700.7px;top:710.00px;font-size:15px;color:#d2d2d2;letter-spacing:0.409px;">Prefab (PrefabComponent)</div>
<div class="a" style="left:1174.3px;top:739.6px;width:71.7px;height:24px;background:#414141;box-shadow:inset 0 0 0 1px #2a2a2a;border-radius:0 0 0 4.5px;"></div>
<div class="a" style="left:1175.3px;top:739.2px;width:69.7px;height:1.8px;background:#414141;"></div>
<svg class="a" style="left:1188px;top:743.8px;" width="12.2" height="12.2" viewBox="0 0 12.2 12.2"><path d="M6.1 0V12.2M0 6.1H12.2" stroke="#e2e2e2" stroke-width="2.3"/></svg>
<div class="a" style="left:1219.8px;top:748.6px;width:10.4px;height:2.5px;background:#9a9a9a;"></div>
<div class="a t" style="left:655.7px;top:782.00px;font-size:15px;color:#d0d0d0;letter-spacing:-0.058px;font-weight:700;">Events</div>
<div class="a" style="left:308.8px;top:148.2px;width:140.2px;height:49.8px;border:5.2px solid #ee5252"></div>
<div class="a" style="left:456.1px;top:156.1px;width:31.2px;height:31.2px;border-radius:50%;background:#2196f3"></div>
<div class="a t" style="left:451.7px;width:40px;text-align:center;top:158.49px;font-family:'DejaVu Serif','Liberation Serif',serif;font-weight:700;font-size:23px;color:#fff">1</div>
<div class="a" style="left:247px;top:325px;width:280.3px;height:65.8px;border:5.2px solid #ee5252"></div>
<div class="a" style="left:536.9px;top:339.9px;width:31.2px;height:31.2px;border-radius:50%;background:#2196f3"></div>
<div class="a t" style="left:532.5px;width:40px;text-align:center;top:342.29px;font-family:'DejaVu Serif','Liberation Serif',serif;font-weight:700;font-size:23px;color:#fff">2</div>
<div class="a" style="left:1.2px;top:679px;width:104px;height:49.2px;border:5.3px solid #ee5252"></div>
<div class="a" style="left:107.9px;top:686.7px;width:31.2px;height:31.2px;border-radius:50%;background:#2196f3"></div>
<div class="a t" style="left:103.5px;width:40px;text-align:center;top:689.09px;font-family:'DejaVu Serif','Liberation Serif',serif;font-weight:700;font-size:23px;color:#fff">1</div>
<div class="a" style="left:897px;top:604.3px;width:106.4px;height:58.3px;border:5.2px solid #ee5252"></div>
<div class="a" style="left:1008.8px;top:617.8px;width:31.2px;height:31.2px;border-radius:50%;background:#2196f3"></div>
<div class="a t" style="left:1004.4px;width:40px;text-align:center;top:620.19px;font-family:'DejaVu Serif','Liberation Serif',serif;font-weight:700;font-size:23px;color:#fff">1</div>
<div class="a" style="left:657.4px;top:656.7px;width:110.5px;height:52.8px;border:5.2px solid #ee5252"></div>
<div class="a" style="left:785px;top:662px;width:31.2px;height:31.2px;border-radius:50%;background:#2196f3"></div>
<div class="a t" style="left:780.6px;width:40px;text-align:center;top:664.39px;font-family:'DejaVu Serif','Liberation Serif',serif;font-weight:700;font-size:23px;color:#fff">1</div>
<div class="a" style="left:657.8px;top:704.6px;width:251.2px;height:41.2px;border:5.2px solid #ee5252"></div>
<div class="a" style="left:924.1px;top:710.9px;width:31.2px;height:31.2px;border-radius:50%;background:#2196f3"></div>
<div class="a t" style="left:919.7px;width:40px;text-align:center;top:713.29px;font-family:'DejaVu Serif','Liberation Serif',serif;font-weight:700;font-size:23px;color:#fff">2</div>
</div>
</body></html>
